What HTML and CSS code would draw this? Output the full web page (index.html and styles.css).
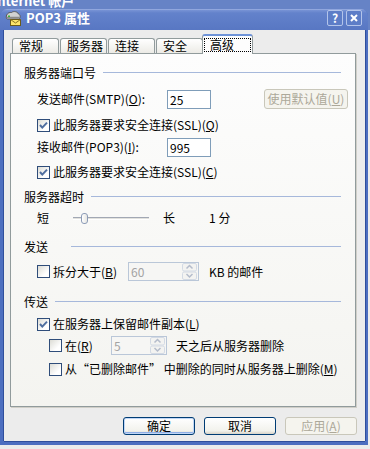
FILE: index.html
```html
<!DOCTYPE html>
<html lang="zh-CN">
<head>
    <meta charset="UTF-8">
    <title>POP3 属性</title>
    <link rel="stylesheet" href="styles.css">
</head>
<body>
    <div class="backdrop"><span class="backdrop-title">Internet 帐户</span></div>

    <div class="window">
        <div class="titlebar">
            <svg class="title-icon" width="16" height="16" viewBox="0 0 16 16">
                <path d="M1.5 8.5 C0.5 5 3 2 6.5 2.5 C8.5 0.8 12.5 1.5 13.5 4 C15.5 4.5 15.8 8 13.8 9 L2.5 9 Z" fill="#d2d2d2" stroke="#5a5a5a" stroke-width="1"/>
                <path d="M2 7.5 L14.5 7.5" stroke="#8a8a8a" stroke-width="1.5"/>
                <rect x="3" y="5.5" width="2" height="1.5" fill="#3cb43c"/>
                <rect x="5.5" y="9.5" width="10" height="6" fill="#fde46a" stroke="#6b5a1a" stroke-width="1"/>
                <path d="M5.5 9.5 L10.5 13 L15.5 9.5" fill="none" stroke="#8b7420" stroke-width="1"/>
            </svg>
            <span class="title-text">POP3 属性</span>
            <div class="title-buttons">
                <span class="title-btn">?</span>
                <span class="title-btn">
                    <svg width="8" height="8" viewBox="0 0 8 8"><path d="M1 1 L7 7 M7 1 L1 7" stroke="#fff" stroke-width="2"/></svg>
                </span>
            </div>
        </div>

        <div class="client">
            <div class="tabs">
                <div class="tab">常规</div>
                <div class="tab">服务器</div>
                <div class="tab">连接</div>
                <div class="tab">安全</div>
                <div class="tab tab-active"><span class="focus">高级</span></div>
            </div>

            <div class="panel">
                <div class="group-head"><span>服务器端口号</span><i class="rule"></i></div>
                <div class="row row-field row-wide">
                    <span class="field-label">发送邮件(SMTP)(<u>O</u>):</span>
                    <span class="text-box">25</span>
                    <button class="btn btn-wide" disabled>使用默认值(<u>U</u>)</button>
                </div>
                <div class="row row-wide">
                    <span class="check"><svg width="11" height="11" viewBox="0 0 11 11"><path d="M2 5 L4.3 7.6 L9 2.6" fill="none" stroke="#4f6e9f" stroke-width="2"/></svg></span>
                    <span>此服务器要求安全连接(SSL)(<u>Q</u>)</span>
                </div>
                <div class="row row-field row-tight">
                    <span class="field-label">接收邮件(POP3)(<u>I</u>):</span>
                    <span class="text-box">995</span>
                </div>
                <div class="row">
                    <span class="check"><svg width="11" height="11" viewBox="0 0 11 11"><path d="M2 5 L4.3 7.6 L9 2.6" fill="none" stroke="#4f6e9f" stroke-width="2"/></svg></span>
                    <span>此服务器要求安全连接(SSL)(<u>C</u>)</span>
                </div>

                <div class="group-head group-head-near"><span>服务器超时</span><i class="rule"></i></div>
                <div class="row row-snug">
                    <span>短</span>
                    <div class="slider">
                        <div class="slider-track"></div>
                        <div class="slider-thumb"></div>
                    </div>
                    <span class="slider-max">长</span>
                    <span class="slider-value">1 分</span>
                </div>

                <div class="group-head group-head-far"><span>发送</span><i class="rule rule-wide"></i></div>
                <div class="row row-spin">
                    <span class="check"></span>
                    <span class="label-split">拆分大于(<u>B</u>)</span>
                    <div class="spin spin-split">
                        <span class="spin-value">60</span>
                        <svg class="spin-btns" width="15" height="17" viewBox="0 0 15 17">
                            <rect x="0.5" y="0.5" width="14" height="7.5" rx="1.5" fill="#f3f3f1" stroke="#d3dae4"/>
                            <rect x="0.5" y="9" width="14" height="7.5" rx="1.5" fill="#f3f3f1" stroke="#d3dae4"/>
                            <path d="M4.5 5.5 L7.5 2.5 L10.5 5.5" fill="none" stroke="#b4bccb" stroke-width="1.5"/>
                            <path d="M4.5 11 L7.5 14 L10.5 11" fill="none" stroke="#b4bccb" stroke-width="1.5"/>
                        </svg>
                    </div>
                    <span class="spin-after">KB 的邮件</span>
                </div>

                <div class="group-head"><span>传送</span><i class="rule"></i></div>
                <div class="row">
                    <span class="check"><svg width="11" height="11" viewBox="0 0 11 11"><path d="M2 5 L4.3 7.6 L9 2.6" fill="none" stroke="#4f6e9f" stroke-width="2"/></svg></span>
                    <span>在服务器上保留邮件副本(<u>L</u>)</span>
                </div>
                <div class="row row-sub row-spin row-tight">
                    <span class="check"></span>
                    <span class="label-days">在(<u>R</u>)</span>
                    <div class="spin spin-days">
                        <span class="spin-value">5</span>
                        <svg class="spin-btns" width="15" height="17" viewBox="0 0 15 17">
                            <rect x="0.5" y="0.5" width="14" height="7.5" rx="1.5" fill="#f3f3f1" stroke="#d3dae4"/>
                            <rect x="0.5" y="9" width="14" height="7.5" rx="1.5" fill="#f3f3f1" stroke="#d3dae4"/>
                            <path d="M4.5 5.5 L7.5 2.5 L10.5 5.5" fill="none" stroke="#b4bccb" stroke-width="1.5"/>
                            <path d="M4.5 11 L7.5 14 L10.5 11" fill="none" stroke="#b4bccb" stroke-width="1.5"/>
                        </svg>
                    </div>
                    <span class="spin-after spin-after-days">天之后从服务器删除</span>
                </div>
                <div class="row row-sub row-snug">
                    <span class="check"></span>
                    <span>从“已删除邮件” 中删除的同时从服务器上删除(<u>M</u>)</span>
                </div>
            </div>

            <div class="buttons">
                <button class="btn btn-default">确定</button>
                <button class="btn">取消</button>
                <button class="btn" disabled>应用(<u>A</u>)</button>
            </div>
        </div>
    </div>
</body>
</html>
```

FILE: styles.css
```css
* {
    box-sizing: border-box;
}

body {
    margin: 0;
    width: 370px;
    height: 449px;
    overflow: hidden;
    background: linear-gradient(#6683c6 0, #6683c6 30px, #ececec 30px);
    font-family: "Noto Sans CJK SC", sans-serif;
    font-size: 12px;
    line-height: 14px;
    color: #000;
}

/* window behind the dialog */
.backdrop {
    height: 9px;
    overflow: hidden;
}

.backdrop-title {
    display: block;
    margin: -6px 0 0 -7px;
    color: #fff;
    font-weight: bold;
    font-size: 13px;
    white-space: nowrap;
}

.window {
    width: 368px;
    height: 436px;
    padding-bottom: 4px;
    background: #4d6ec0;
    border-radius: 7px 7px 0 0;
}

.titlebar {
    display: flex;
    align-items: flex-start;
    height: 21px;
    padding: 1px 6px 0 5px;
    border-radius: 7px 7px 0 0;
    background: linear-gradient(#a9bbe7 0, #7893d5 1px, #6382cb 4px, #5877c3 100%);
}

.title-icon {
    flex: none;
}

.title-text {
    margin-left: 5px;
    color: #fff;
    font-weight: bold;
    font-size: 13px;
    line-height: 16px;
}

.title-buttons {
    display: flex;
    gap: 3px;
    margin-left: auto;
}

.title-btn {
    display: flex;
    align-items: center;
    justify-content: center;
    width: 16px;
    height: 16px;
    border: 1px solid #b3c4ea;
    border-radius: 2px;
    background: #5d7dc7;
    color: #fff;
    font-weight: bold;
    font-size: 12px;
}

.client {
    height: 411px;
    margin: 0 3px 0 4px;
    padding-top: 4px;
    background: #ececec;
    box-shadow: -1px 0 0 #2f4e9c, 1px 0 0 #2f4e9c, 0 1px 0 #2f4e9c;
}

/* tabs */
.tabs {
    position: relative;
    z-index: 1;
    display: flex;
    align-items: flex-end;
    height: 19px;
    margin-left: 8px;
}

.tab {
    width: 47px;
    height: 15px;
    margin-right: 1px;
    padding-left: 6px;
    border: 1px solid #919b9c;
    border-bottom: none;
    border-radius: 3px 3px 0 0;
    background: linear-gradient(#ffffff, #ecebe6);
    line-height: 13px;
}

.tab-active {
    width: 51px;
    height: 20px;
    margin: 0 0 -1px -2px;
    padding: 0;
    border-top: 2px solid #6e93d8;
    background: #fdfdfd;
}

.focus {
    display: block;
    height: 14px;
    margin: 2px 1px 0;
    padding-left: 5px;
    border: 1px dotted #000;
    line-height: 12px;
}

.panel {
    width: 346px;
    height: 354px;
    margin-left: 6px;
    padding: 12px 0 0 13px;
    border: 1px solid #919b9c;
    background: linear-gradient(#fdfdfd, #f4f4f0);
    box-shadow: 1px 1px 0 #d0cfc8;
}

/* group headings */
.group-head {
    display: flex;
    align-items: center;
    width: 317px;
    height: 14px;
    margin-top: 14px;
}

.group-head:first-child {
    margin-top: 0;
}

.group-head-near {
    margin-top: 11px;
}

.group-head-far {
    margin-top: 15px;
}

.rule {
    flex: 1;
    height: 1px;
    margin: 0 0 2px 7px;
    background: #a6b8db;
}

.rule-wide {
    margin-left: 23px;
}

/* rows */
.row {
    display: flex;
    align-items: center;
    height: 14px;
    margin: 8px 0 0 13px;
    white-space: nowrap;
}

.row-wide {
    margin-top: 9px;
}

.row-tight {
    margin-top: 5px;
}

.row-snug {
    margin-top: 7px;
}

.row-field {
    height: 20px;
}

.row-spin {
    height: 19px;
}

.row-sub {
    margin-left: 25px;
}

.field-label {
    width: 130px;
}

.text-box {
    width: 44px;
    height: 19px;
    padding-left: 2px;
    border: 1px solid #7f9db9;
    background: #fff;
    line-height: 17px;
}

.check {
    flex: none;
    display: flex;
    align-items: center;
    justify-content: center;
    width: 13px;
    height: 13px;
    margin-right: 3px;
    border: 1px solid #2f4d7a;
    background: linear-gradient(135deg, #dcdcd5, #ffffff 70%);
}

/* slider */
.slider {
    position: relative;
    width: 76px;
    height: 14px;
    margin-left: 24px;
}

.slider-track {
    height: 3px;
    margin-top: 6px;
    border-top: 1px solid #a2a8b4;
    border-bottom: 1px solid #ffffff;
    background: #e2e2de;
}

.slider-thumb {
    position: absolute;
    left: 8px;
    top: 2px;
    width: 7px;
    height: 11px;
    border: 1px solid #8d9cb7;
    border-radius: 3px;
    background: linear-gradient(90deg, #ffffff, #e6e6e2);
}

.slider-max {
    margin-left: 14px;
}

.slider-value {
    margin-left: 34px;
}

/* spinners */
.label-split {
    width: 75px;
}

.label-days {
    width: 46px;
}

.spin {
    display: flex;
    align-items: center;
    height: 19px;
    padding: 0 1px 0 2px;
    border: 1px solid #bac7d8;
    background: #f6f6f4;
    color: #a3a3a3;
}

.spin-split {
    width: 71px;
}

.spin-days {
    width: 56px;
}

.spin-value {
    flex: 1;
}

.spin-btns {
    flex: none;
}

.spin-after {
    margin-left: 10px;
}

.spin-after-days {
    margin-left: 9px;
}

/* buttons */
.buttons {
    display: flex;
    justify-content: flex-end;
    gap: 9px;
    margin-top: 10px;
    padding-right: 8px;
}

.btn {
    width: 72px;
    height: 18px;
    padding: 0;
    border: 1px solid #003c74;
    border-radius: 3px;
    background: linear-gradient(#ffffff, #f2f2ec 80%, #d8d3c8);
    font: inherit;
    line-height: 16px;
    color: #000;
    text-align: center;
}

.btn-default {
    box-shadow: inset 0 0 0 1px #c0d6f6, inset 0 -2px 0 #8faee6;
}

.btn-wide {
    width: 84px;
    height: 20px;
    margin-left: 53px;
    line-height: 18px;
}

.btn:disabled {
    border-color: #c9c7ba;
    background: #f5f4ee;
    color: #aca899;
}
```
